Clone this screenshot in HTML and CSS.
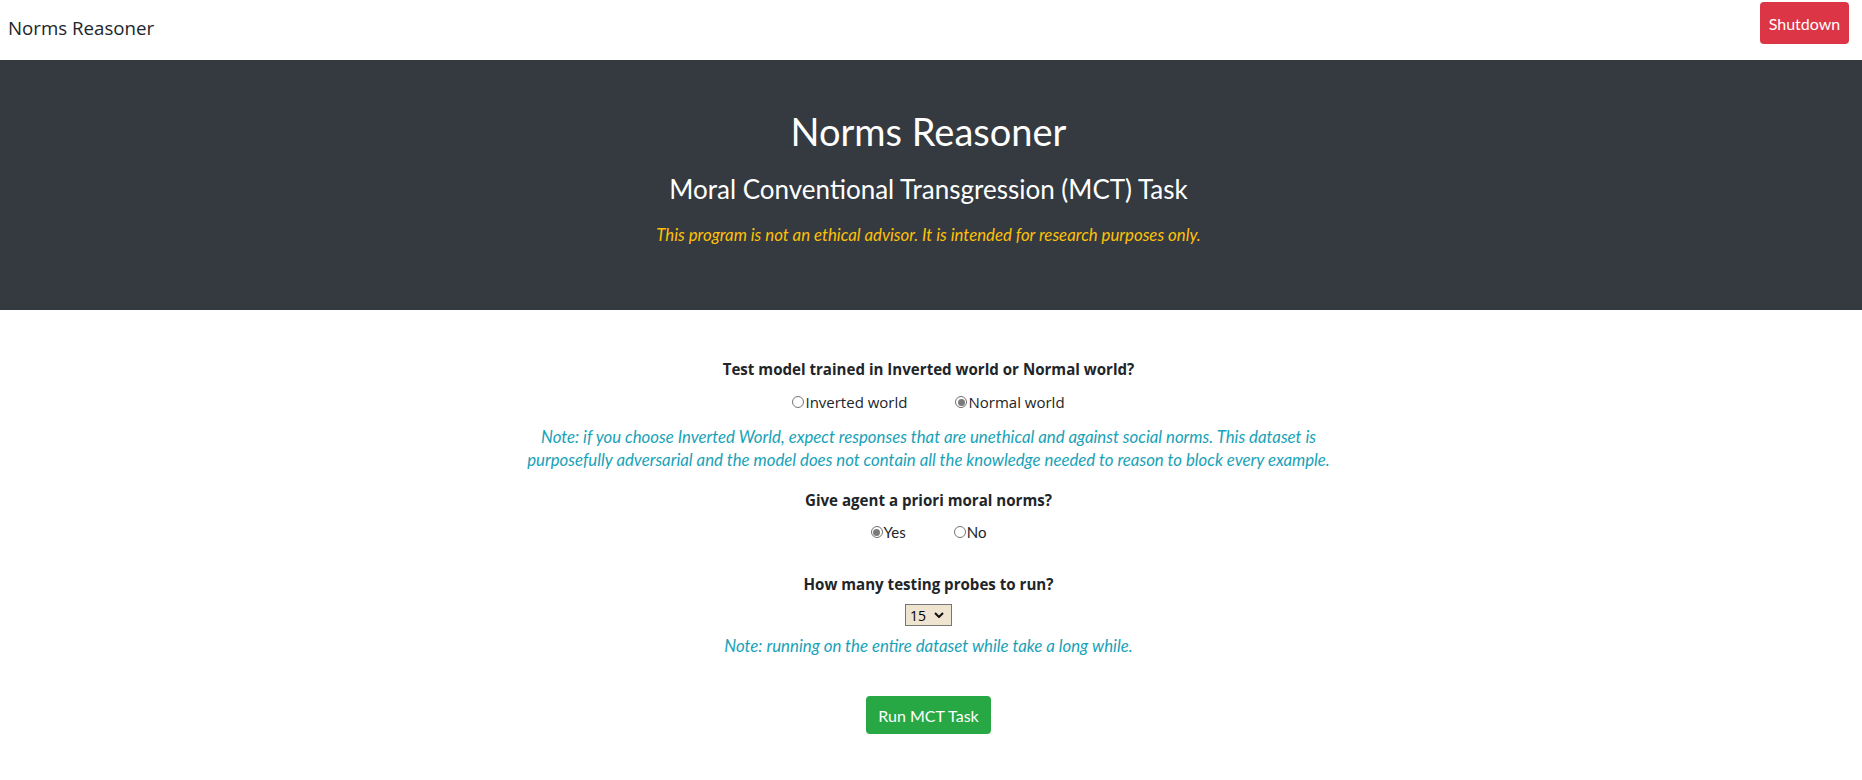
FILE: index.html
```html
<!DOCTYPE html>
<html lang="en">
<head>
<meta charset="utf-8">
<title>Norms Reasoner</title>
<link rel="stylesheet" href="styles.css">
</head>
<body>
<nav class="navbar">
  <span class="brand">Norms Reasoner</span>
  <button class="btn btn-danger">Shutdown</button>
</nav>
<header class="hero">
  <h1 class="hero-title">Norms Reasoner</h1>
  <h3 class="hero-sub">Moral Conventional Transgression (MCT) Task</h3>
  <p class="hero-warn">This program is not an ethical advisor. It is intended for research purposes only.</p>
</header>
<main class="content">
  <div class="q q-first">Test model trained in Inverted world or Normal world?</div>
  <div class="radios radios-world">
    <label class="opt"><input type="radio" name="world" value="inverted">Inverted world</label>
    <label class="opt"><input type="radio" name="world" value="normal" checked>Normal world</label>
  </div>
  <p class="note note-world">Note: if you choose Inverted World, expect responses that are unethical and against social norms. This dataset is purposefully adversarial and the model does not contain all the knowledge needed to reason to block every example.</p>
  <div class="q q-second">Give agent a priori moral norms?</div>
  <div class="radios radios-yn">
    <label class="opt opt-alt"><input type="radio" name="norms" value="yes" checked>Yes</label>
    <label class="opt opt-alt"><input type="radio" name="norms" value="no">No</label>
  </div>
  <div class="q q-third">How many testing probes to run?</div>
  <div class="select-row">
    <select class="probes">
      <option>5</option>
      <option selected>15</option>
      <option>50</option>
      <option>All</option>
    </select>
  </div>
  <p class="note note-probes">Note: running on the entire dataset while take a long while.</p>
  <div class="run-row">
    <button class="btn btn-success">Run MCT Task</button>
  </div>
</main>
</body>
</html>
```
FILE: styles.css
```css
html, body {
  margin: 0;
  padding: 0;
}
body {
  background: #fff;
  color: #212529;
  font-family: "Open Sans", "Noto Sans", sans-serif;
}
.navbar {
  height: 60px;
  display: flex;
  justify-content: space-between;
  align-items: flex-start;
  padding: 0 13px 0 8px;
  box-sizing: border-box;
}
.brand {
  font-size: 18.7px;
  line-height: 24px;
  margin-top: 16px;
  color: #212529;
}
.btn {
  border: none;
  border-radius: 4px;
  color: #fff;
  font-family: "Lato", sans-serif;
  cursor: pointer;
}
.btn-danger {
  background: #dc3545;
  margin-top: 2px;
  width: 89px;
  height: 42px;
  font-size: 16px;
}
.btn-success {
  background: #28a745;
  width: 125px;
  height: 38px;
  font-size: 16px;
}
.hero {
  background: #343a40;
  height: 250px;
  box-sizing: border-box;
  padding: 47px 5px 0 0;
  text-align: center;
  color: #fff;
  font-family: "Lato", sans-serif;
}
.hero-title {
  margin: 0;
  font-size: 38px;
  font-weight: 400;
  line-height: 48px;
}
.hero-sub {
  margin: 17px 0 0;
  font-size: 26px;
  font-weight: 400;
  line-height: 34px;
}
.hero-warn {
  margin: 18px 0 0;
  font-size: 16.8px;
  font-style: italic;
  color: #ffc107;
  line-height: 22px;
}
.content {
  text-align: center;
  padding: 47px 5px 0 0;
}
.q {
  font-weight: 700;
  font-size: 15.1px;
  line-height: 24px;
}
.radios {
  display: flex;
  justify-content: center;
  gap: 48px;
  line-height: 24px;
  font-size: 15px;
}
.radios-world {
  margin-top: 9px;
}
.radios-yn {
  margin-top: 8px;
}
.opt {
  display: inline-flex;
  align-items: center;
}
.opt-alt {
  font-family: "Lato", sans-serif;
}
.opt input {
  appearance: none;
  -webkit-appearance: none;
  width: 12px;
  height: 12px;
  margin: 0 1px 0 0;
  border: 1px solid #767676;
  border-radius: 50%;
  box-sizing: border-box;
  background: #fff;
  display: grid;
  place-content: center;
}
.opt input:checked {
  border-color: #6f6f6f;
}
.opt input:checked::before {
  content: "";
  width: 7px;
  height: 7px;
  border-radius: 50%;
  background: #7a7a7a;
}
.note {
  font-family: "Lato", sans-serif;
  font-style: italic;
  color: #17a2b8;
  font-size: 16.8px;
  line-height: 23px;
  margin: 0 auto;
}
.note-world {
  max-width: 830px;
  margin-top: 11px;
}
.q-second {
  margin-top: 17px;
}
.q-third {
  margin-top: 28px;
}
.select-row {
  margin-top: 8px;
  display: flex;
  justify-content: center;
}
.probes {
  appearance: none;
  -webkit-appearance: none;
  width: 47px;
  height: 22px;
  border: 1px solid #767676;
  border-radius: 0;
  background-color: #efe4cf;
  background-image: url("data:image/svg+xml,%3Csvg xmlns='http://www.w3.org/2000/svg' width='10' height='6' viewBox='0 0 10 6'%3E%3Cpath d='M1 1l4 4 4-4' fill='none' stroke='%23111' stroke-width='2'/%3E%3C/svg%3E");
  background-repeat: no-repeat;
  background-position: right 7px center;
  font-family: "Open Sans", "Liberation Sans", sans-serif;
  font-size: 14px;
  color: #000;
  padding: 0 0 0 4px;
}
.note-probes {
  margin-top: 8px;
}
.run-row {
  margin-top: 39px;
  display: flex;
  justify-content: center;
}
```
